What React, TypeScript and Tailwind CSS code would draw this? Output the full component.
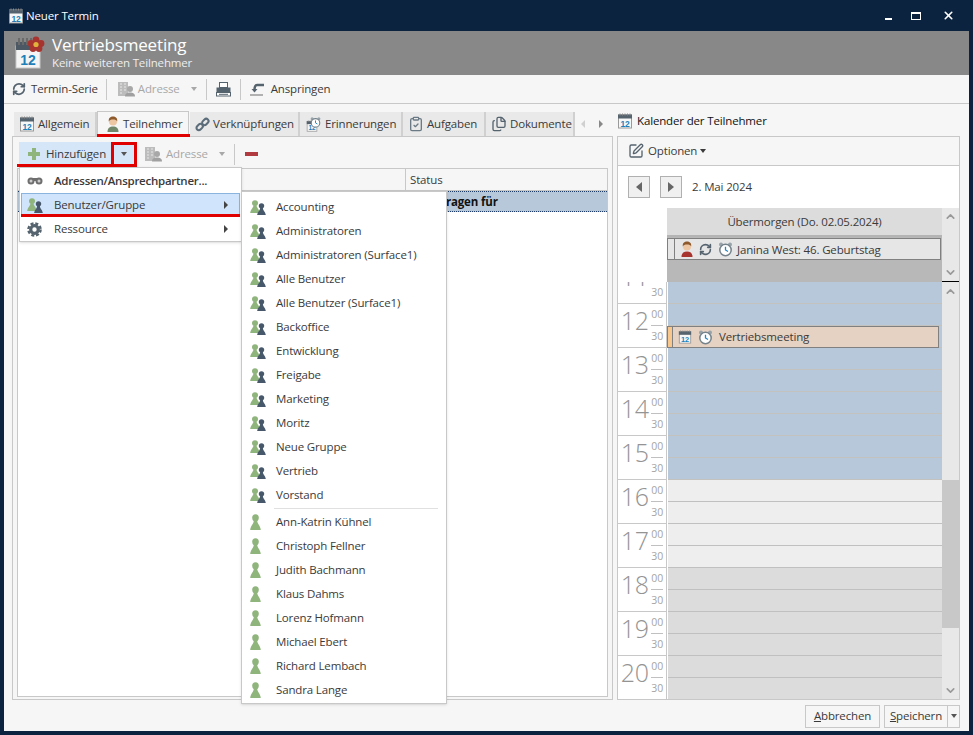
import { ChevronDown, ChevronUp, ClipboardCheck, Files, RefreshCw, SquarePen, X } from "lucide-react";
import type { ReactNode } from "react";

const GROUPS = [
  "Accounting",
  "Administratoren",
  "Administratoren (Surface1)",
  "Alle Benutzer",
  "Alle Benutzer (Surface1)",
  "Backoffice",
  "Entwicklung",
  "Freigabe",
  "Marketing",
  "Moritz",
  "Neue Gruppe",
  "Vertrieb",
  "Vorstand",
];

const USERS = [
  "Ann-Katrin Kühnel",
  "Christoph Fellner",
  "Judith Bachmann",
  "Klaus Dahms",
  "Lorenz Hofmann",
  "Michael Ebert",
  "Richard Lembach",
  "Sandra Lange",
];

const HOURS = [12, 13, 14, 15, 16, 17, 18, 19, 20];

function CalendarIcon({ size = 16 }: { size?: number }) {
  return (
    <svg width={size} height={size} viewBox="0 0 16 16" className="shrink-0">
      <rect x="1.5" y="2" width="13" height="13" fill="#f7f7f7" stroke="#9a9a9a" />
      <rect x="1" y="1.5" width="14" height="4" fill="#55636e" />
      <path d="M3 0.5v2M5.5 0.5v2M8 0.5v2M10.5 0.5v2M13 0.5v2" stroke="#8a8a8a" />
      <text x="8" y="13.5" textAnchor="middle" fontSize="8.5" fontWeight="700" fill="#1f7fb8" fontFamily="Liberation Sans, sans-serif">
        12
      </text>
    </svg>
  );
}

function HeaderCalendar() {
  return (
    <svg width="30" height="34" viewBox="0 0 30 34" className="shrink-0">
      <rect x="1" y="10" width="24" height="22" fill="#f4f4f4" stroke="#c8c8c8" />
      <rect x="1" y="6" width="24" height="8" fill="#4c5863" />
      <path d="M4 2v7M8 2v7M12 2v7M16 2v7" stroke="#6a6a6a" strokeWidth="2" />
      <text x="13" y="29" textAnchor="middle" fontSize="14" fontWeight="700" fill="#1f7fb8" fontFamily="Liberation Sans, sans-serif">
        12
      </text>
      <g fill="#a8342f">
        <circle cx="21" cy="4" r="3.4" />
        <circle cx="26" cy="7.5" r="3.4" />
        <circle cx="24" cy="12.5" r="3.4" />
        <circle cx="18" cy="12.5" r="3.4" />
        <circle cx="16" cy="7.5" r="3.4" />
      </g>
      <circle cx="21" cy="8.5" r="2.6" fill="#e0b23c" />
    </svg>
  );
}

function AddressIcon() {
  return (
    <svg width="18" height="16" viewBox="0 0 18 16" className="shrink-0">
      <rect x="1" y="1" width="10" height="14" fill="#bcbcbc" />
      <path d="M3 3h2M7 3h2M3 6h2M7 6h2M3 9h2M7 9h2M3 12h2" stroke="#e8e8e8" />
      <circle cx="13" cy="8" r="3" fill="#a8a8a8" />
      <path d="M8 15.5c0-3 2-4 5-4s5 1 5 4z" fill="#a0a0a0" />
    </svg>
  );
}

function PrinterIcon() {
  return (
    <svg width="15" height="15" viewBox="0 0 15 15" className="shrink-0">
      <rect x="3.5" y="0.5" width="8" height="5" fill="#fff" stroke="#55636e" />
      <rect x="0.5" y="5.500" width="14" height="5" fill="#55636e" />
      <rect x="0.500" y="10.500" width="14" height="3.500" fill="#fff" stroke="#55636e" />
      <path d="M3 12.300h9" stroke="#55636e" />
    </svg>
  );
}

function GearIcon() {
  return (
    <svg width="15" height="15" viewBox="0 0 15 15" className="shrink-0" fill="none" stroke="#55636e">
      <circle cx="7.500" cy="7.500" r="3.800" strokeWidth="3.200" />
      <circle cx="7.500" cy="7.500" r="6.100" strokeWidth="2.400" strokeDasharray="3 1.800" />
    </svg>
  );
}

function PersonIcon({ shirt = "#71876a" }: { shirt?: string }) {
  return (
    <svg width="14" height="16" viewBox="0 0 14 16" className="shrink-0">
      <path d="M1.5 16c0-4 2.200-5.500 5.500-5.500s5.500 1.500 5.500 5.500z" fill={shirt} />
      <circle cx="7" cy="5.500" r="4" fill="#edc6a4" />
      <path d="M2.800 5.500C2.300 2 4.500.6 7 .6s4.700 1.400 4.200 4.900C10.500 3.800 9 3.400 7 3.400s-3.500.4-4.200 2.100z" fill="#8e5a2c" />
    </svg>
  );
}

function ClockIcon() {
  return (
    <svg width="15" height="15" viewBox="0 0 15 15" className="shrink-0">
      <circle cx="3" cy="2.500" r="2" fill="#98a3aa" />
      <circle cx="12" cy="2.500" r="2" fill="#98a3aa" />
      <circle cx="7.500" cy="8" r="5.700" fill="#fff" stroke="#75838c" strokeWidth="1.500" />
      <path d="M7.500 4.800V8l2.500 1.500" stroke="#2a86bd" strokeWidth="1.300" fill="none" />
    </svg>
  );
}

function PawnIcon({ color = "#8fb47c", className = "" }: { color?: string; className?: string }) {
  return (
    <svg viewBox="0 0 11 16" preserveAspectRatio="none" className={`block shrink-0 ${className}`}>
      <ellipse cx="5.500" cy="3.800" rx="3.300" ry="3.600" fill={color} />
      <path d="M3.800 6.500h3.400c0 3.200 3 4.800 3.600 9.500H.2c.6-4.700 3.600-6.300 3.600-9.500z" fill={color} />
    </svg>
  );
}

function GroupIcon() {
  return (
    <span className="flex w-[16px] shrink-0 items-start">
      <PawnIcon className="h-[13px] w-[10px]" />
      <PawnIcon color="#46586a" className="-ml-[3px] mt-[3px] h-[12px] w-[9px]" />
    </span>
  );
}

function LinkIcon() {
  return (
    <svg width="15" height="15" viewBox="0 0 16 16" className="shrink-0" fill="none" stroke="#5b6d7a" strokeWidth="2.200">
      <rect x="1.200" y="8.200" width="7.500" height="5" rx="2.500" transform="rotate(-45 5 10.700)" />
      <rect x="7.300" y="2.800" width="7.500" height="5" rx="2.500" transform="rotate(-45 11 5.300)" />
    </svg>
  );
}

function ReminderIcon() {
  return (
    <span className="relative block h-[16px] w-[16px] shrink-0">
      <span className="absolute bottom-0 left-0">
        <CalendarIcon size={12} />
      </span>
      <span className="absolute -right-[1px] -top-[1px] scale-75">
        <ClockIcon />
      </span>
    </span>
  );
}

function Caret({ className = "border-t-[#555]" }: { className?: string }) {
  return <span className={`inline-block h-0 w-0 border-x-[3.500px] border-t-[4px] border-x-transparent ${className}`} />;
}

function MenuArrow() {
  return <span className="ml-auto block h-0 w-0 border-y-[4.500px] border-l-[4.500px] border-y-transparent border-l-[#444]" />;
}

function Tab({ width, active, children }: { width: string; active?: boolean; children: ReactNode }) {
  return (
    <div
      className={
        active
          ? `-mb-px flex h-[26px] items-center gap-[3px] border border-b-0 border-[#c8c8c8] bg-[#f6f6f6] pb-[2px] ${width}`
          : `flex h-[24px] items-center gap-[3px] border-r-2 border-[#d0d0d0] bg-[#e9e9e9] ${width}`
      }
    >
      {children}
    </div>
  );
}

function HourRow({ hour }: { hour: number }) {
  return (
    <div className="flex h-[44px] shrink-0 border-b border-[#c8c8c8] bg-white">
      <div className="w-[31px] text-right text-[25px] leading-[32px] font-light text-[#949494]">{hour}</div>
      <div className="ml-[2px] flex w-[12px] flex-col text-right text-[10.500px] leading-[21px] text-[#a5a5a5]">
        <div className="h-[22px] border-b border-[#c0c0c0]">00</div>
        <div>30</div>
      </div>
    </div>
  );
}

function DayCell({ className }: { className: string }) {
  return <div className={`h-[22px] shrink-0 border-b ${className}`} />;
}

export default function App() {
  const halfHours = Array.from({ length: 19 }, (_, i) => i);

  return (
    <div className="relative flex h-[735px] w-[973px] flex-col overflow-hidden bg-[#0c2340] font-['Open_Sans',sans-serif] text-[11.500px] tracking-[-0.15px] text-[#3a3a3a]">
      {/* title bar */}
      <div className="flex h-[31px] shrink-0 items-center pl-[8px] text-white">
        <CalendarIcon />
        <span className="ml-[2px]">Neuer Termin</span>
        <div className="ml-auto flex items-center pr-[18px]">
          <span className="mt-[7px] h-[2px] w-[7px] bg-white" />
          <span className="ml-[19px] h-[8px] w-[10px] border border-t-2 border-white" />
          <X size={13} strokeWidth={3} className="ml-[21px] text-white" />
        </div>
      </div>

      <div className="mx-[4px] mb-[4px] flex min-h-0 flex-1 flex-col bg-[#f6f6f6]">
        {/* header */}
        <div className="flex h-[44px] shrink-0 items-center bg-[#888] pl-[11px] text-white">
          <HeaderCalendar />
          <div className="ml-[7px] mt-[-1px]">
            <div className="text-[17px] leading-[20px]">Vertriebsmeeting</div>
            <div className="text-[11.500px] leading-[15px] text-[#eee]">Keine weiteren Teilnehmer</div>
          </div>
        </div>

        {/* toolbar */}
        <div className="flex h-[29px] shrink-0 items-center border-b border-[#c8c8c8] pl-[8px]">
          <RefreshCw size={14} strokeWidth={3} className="text-[#55636e]" />
          <span className="ml-[5px]">Termin-Serie</span>
          <span className="ml-[8px] mr-[10px] h-[21px] w-px bg-[#c8c8c8]" />
          <AddressIcon />
          <span className="ml-[3px] text-[#a8a8a8]">Adresse</span>
          <Caret className="ml-[11px] border-t-[#a8a8a8]" />
          <span className="ml-[9px] mr-[9px] h-[21px] w-px bg-[#c8c8c8]" />
          <PrinterIcon />
          <span className="ml-[9px] mr-[9px] h-[21px] w-px bg-[#c8c8c8]" />
          <svg width="16" height="14" viewBox="0 0 16 14" fill="none" className="shrink-0">
            <path d="M14 3H7C5 3 4.500 5 4.500 8" stroke="#55636e" strokeWidth="2.500" />
            <path d="M1.500 7h6l-3 3.500z" fill="#55636e" />
            <path d="M0 13h13" stroke="#9a9a9a" strokeWidth="1.500" />
          </svg>
          <span className="ml-[5px]">Anspringen</span>
        </div>

        {/* body */}
        <div className="flex min-h-0 flex-1 gap-[4px] pl-[8px]">
          {/* left column */}
          <div className="flex w-[601px] shrink-0 flex-col">
            <div className="flex h-[32px] shrink-0 items-end pl-[2px]">
              <Tab width="w-[83px] pl-[5px]">
                <CalendarIcon />
                Allgemein
              </Tab>
              <Tab width="w-[92px] pl-[8px]" active>
                <PersonIcon />
                Teilnehmer
              </Tab>
              <div className="w-[1px]" />
              <Tab width="w-[110px] pl-[5px]">
                <LinkIcon />
                Verknüpfungen
              </Tab>
              <Tab width="w-[103px] pl-[6px]">
                <ReminderIcon />
                Erinnerungen
              </Tab>
              <Tab width="w-[83px] pl-[5px]">
                <ClipboardCheck size={16} className="text-[#6b7a84]" />
                Aufgaben
              </Tab>
              <Tab width="w-[89px] pl-[5px]">
                <Files size={16} className="text-[#55636e]" />
                Dokumente
              </Tab>
              <div className="ml-[6px] flex h-[24px] items-center gap-[14px]">
                <span className="h-0 w-0 border-y-[4px] border-r-[4px] border-y-transparent border-r-[#d0d0d0]" />
                <span className="h-0 w-0 border-y-[4px] border-l-[4px] border-y-transparent border-l-[#888]" />
              </div>
            </div>
            <div className="flex min-h-0 flex-1 flex-col border border-[#c8c8c8] bg-[#f6f6f6]">
              <div className="flex h-[31px] shrink-0 items-center pl-[6px] pt-[3px]">
                <div className="flex h-[24px] w-[92px] items-center bg-[#d5e6f8] pl-[9px]">
                  <svg width="12" height="12" viewBox="0 0 12 12" className="shrink-0">
                    <path d="M4 0h4v4h4v4H8v4H4V8H0V4h4z" fill="#8fb47c" />
                  </svg>
                  <span className="ml-[6px]">Hinzufügen</span>
                </div>
                <div className="flex h-[24px] w-[26px] items-center justify-center bg-[#d5e6f8]">
                  <Caret />
                </div>
                <span className="ml-[7px]">
                  <AddressIcon />
                </span>
                <span className="ml-[4px] text-[#a8a8a8]">Adresse</span>
                <Caret className="ml-[11px] border-t-[#a8a8a8]" />
                <span className="ml-[9px] h-[21px] w-px bg-[#c8c8c8]" />
                <span className="ml-[10px] h-[4px] w-[13px] bg-[#b03a3f]" />
              </div>
              <div className="mb-[2px] ml-[4px] mr-[4px] flex min-h-0 flex-1 flex-col border border-[#c8c8c8] bg-white">
                <div className="flex h-[22px] shrink-0 border-b border-[#c8c8c8] bg-[#f6f6f6]">
                  <div className="w-[388px] border-r border-[#c8c8c8]" />
                  <div className="pl-[4px] leading-[22px]">Status</div>
                </div>
                <div className="flex h-[21px] shrink-0 border-y border-dotted border-[#1d3b63] bg-[#b7c8da] leading-[19px] font-bold text-[#111]">
                  <div className="w-[389px]" />
                  <div className="pl-[4px]">Eingetragen für</div>
                </div>
              </div>
            </div>
          </div>

          {/* right column */}
          <div className="flex w-[343px] shrink-0 flex-col">
            <div className="flex h-[32px] shrink-0 items-center gap-[4px] pt-[2px] text-[#111]">
              <CalendarIcon />
              Kalender der Teilnehmer
            </div>
            <div className="flex min-h-0 flex-1 flex-col border border-[#c8c8c8] bg-white">
              <div className="flex h-[29px] shrink-0 items-center border-b border-[#c8c8c8] bg-[#f6f6f6] pl-[10px]">
                <SquarePen size={16} className="text-[#55636e]" />
                <span className="ml-[4px]">Optionen</span>
                <Caret className="ml-[3px]" />
              </div>
              <div className="flex h-[42px] shrink-0 items-center pl-[10px]">
                <div className="flex h-[22px] w-[22px] items-center justify-center border border-[#b0b0b0] bg-[#f0f0f0]">
                  <span className="h-0 w-0 border-y-[5px] border-r-[6px] border-y-transparent border-r-[#666]" />
                </div>
                <div className="ml-[10px] flex h-[22px] w-[22px] items-center justify-center border border-[#b0b0b0] bg-[#f0f0f0]">
                  <span className="h-0 w-0 border-y-[5px] border-l-[6px] border-y-transparent border-l-[#666]" />
                </div>
                <span className="ml-[10px]">2. Mai 2024</span>
              </div>

              {/* all-day strip */}
              <div className="flex h-[74px] shrink-0">
                <div className="w-[49px] shrink-0" />
                <div className="flex flex-1 flex-col">
                  <div className="flex h-[29px] shrink-0 items-center justify-center border-b-2 border-[#b4b4b4] bg-[#dcdcdc] pt-[1px]">
                    Übermorgen (Do. 02.05.2024)
                  </div>
                  <div className="flex-1 bg-[#b8b8b8] pt-[1px]">
                    <div className="mr-[1px] flex h-[22px] items-center border border-[#808080] bg-[#e6e6e6] pl-[6px]">
                      <span className="mr-[5px] h-full w-px bg-[#808080]" />
                      <PersonIcon shirt="#a8342f" />
                      <RefreshCw size={13} strokeWidth={3} className="ml-[5px] text-[#55636e]" />
                      <span className="ml-[6px]">
                        <ClockIcon />
                      </span>
                      <span className="ml-[4px] pt-[1px]">Janina West: 46. Geburtstag</span>
                    </div>
                  </div>
                </div>
                <div className="flex w-[17px] shrink-0 flex-col items-center justify-between border-b border-black bg-[#e8e8e8] py-[2px]">
                  <ChevronUp size={13} strokeWidth={3} className="text-[#999]" />
                  <ChevronDown size={13} strokeWidth={3} className="text-[#999]" />
                </div>
              </div>

              {/* time grid */}
              <div className="flex min-h-0 flex-1 overflow-hidden">
                <div className="flex w-[49px] shrink-0 flex-col border-r border-[#c8c8c8]">
                  <div className="h-[22px] shrink-0 overflow-hidden">
                    <div className="-mt-[22px]">
                      <HourRow hour={11} />
                    </div>
                  </div>
                  {HOURS.map((h) => (
                    <HourRow key={h} hour={h} />
                  ))}
                </div>
                <div className="relative flex flex-1 flex-col pl-[1px]">
                  {halfHours.map((i) => (
                    <DayCell
                      key={i}
                      className={
                        i < 9
                          ? "border-[#c4c2bf] bg-[#b7c8da]"
                          : i < 13
                            ? "border-[#c0c0c0] bg-[#eeeeee]"
                            : "border-[#c0c0c0] bg-[#dcdcdc]"
                      }
                    />
                  ))}
                  <div className="absolute left-0 right-[3px] top-[44px] flex h-[22px] items-center border border-[#808080] bg-[#e5d2c2]">
                    <span className="h-full w-[5px] border-r border-[#808080] bg-[#f8c78e]" />
                    <span className="ml-[5px]">
                      <CalendarIcon size={14} />
                    </span>
                    <span className="ml-[6px]">
                      <ClockIcon />
                    </span>
                    <span className="ml-[6px]">Vertriebsmeeting</span>
                  </div>
                </div>
                <div className="flex w-[17px] shrink-0 flex-col bg-[#e8e8e8]">
                  <div className="flex h-[198px] shrink-0 justify-center pt-[3px]">
                    <ChevronUp size={13} strokeWidth={3} className="text-[#999]" />
                  </div>
                  <div className="h-[148px] shrink-0 bg-[#c8c8c8]" />
                  <div className="flex flex-1 items-end justify-center pb-[2px]">
                    <ChevronDown size={13} strokeWidth={3} className="text-[#999]" />
                  </div>
                </div>
              </div>
            </div>
          </div>
        </div>

        {/* footer */}
        <div className="flex h-[31px] shrink-0 items-center justify-end pr-[9px] pt-[1px]">
          <div className="flex h-[23px] w-[75px] items-center justify-center border border-[#c8c8c8]">
            <span>
              <span className="underline">A</span>bbrechen
            </span>
          </div>
          <div className="ml-[4px] flex h-[23px] w-[76px] items-center border border-[#c8c8c8]">
            <span className="flex-1 text-center">
              <span className="underline">S</span>peichern
            </span>
            <span className="flex h-full w-[12px] items-center justify-center border-l border-[#c8c8c8]">
              <Caret />
            </span>
          </div>
        </div>
      </div>

      {/* open dropdown */}
      <div className="absolute left-[19px] top-[167px] h-[75px] w-[223px] border border-[#c8c8c8] bg-white p-[1px] shadow-sm">
        <div className="flex h-[24px] items-center pl-[6px]">
          <svg width="16" height="10" viewBox="0 0 16 10" className="shrink-0">
            <circle cx="4" cy="5" r="3.500" fill="#6e6e6e" />
            <circle cx="12" cy="5" r="3.500" fill="#6e6e6e" />
            <rect x="5" y="2" width="6" height="3" fill="#6e6e6e" />
            <circle cx="4" cy="5" r="1.500" fill="#ccc" />
            <circle cx="12" cy="5" r="1.500" fill="#ccc" />
          </svg>
          <span className="ml-[11px] font-semibold tracking-[-0.25px]">Adressen/Ansprechpartner...</span>
        </div>
        <div className="flex h-[24px] items-center border border-[#8ab4dd] bg-[#d0e5fb] pl-[5px] pr-[11px]">
          <GroupIcon />
          <span className="ml-[11px]">Benutzer/Gruppe</span>
          <MenuArrow />
        </div>
        <div className="flex h-[24px] items-center pl-[6px] pr-[12px]">
          <GearIcon />
          <span className="ml-[12px]">Ressource</span>
          <MenuArrow />
        </div>
      </div>

      {/* sub menu */}
      <div className="absolute left-[241px] top-[191px] w-[206px] border border-[#c8c8c8] bg-white pb-[1px] pt-[3px] shadow-sm">
        {GROUPS.map((name) => (
          <div key={name} className="flex h-[24px] items-center pl-[8px]">
            <GroupIcon />
            <span className="ml-[10px]">{name}</span>
          </div>
        ))}
        <div className="my-[1px] ml-[32px] mr-[8px] h-px bg-[#e0e0e0]" />
        {USERS.map((name, i) => (
          <div key={name} className={`flex h-[24px] items-center pl-[8px] ${i === 0 ? "mt-[1px]" : ""}`}>
            <PawnIcon className="h-[16px] w-[11px]" />
            <span className="ml-[15px]">{name}</span>
          </div>
        ))}
      </div>

      {/* red highlights drawn over the screenshot */}
      <div className="absolute left-[97px] top-[134px] h-[3px] w-[93px] bg-[#e00000]" />
      <div className="absolute left-[17px] top-[164px] h-[3px] w-[120px] bg-[#e00000]" />
      <div className="absolute left-[111px] top-[142px] h-[25px] w-[26px] border-[3px] border-[#e00000]" />
      <div className="absolute left-[21px] top-[214px] h-[3px] w-[219px] bg-[#e00000]" />
    </div>
  );
}
